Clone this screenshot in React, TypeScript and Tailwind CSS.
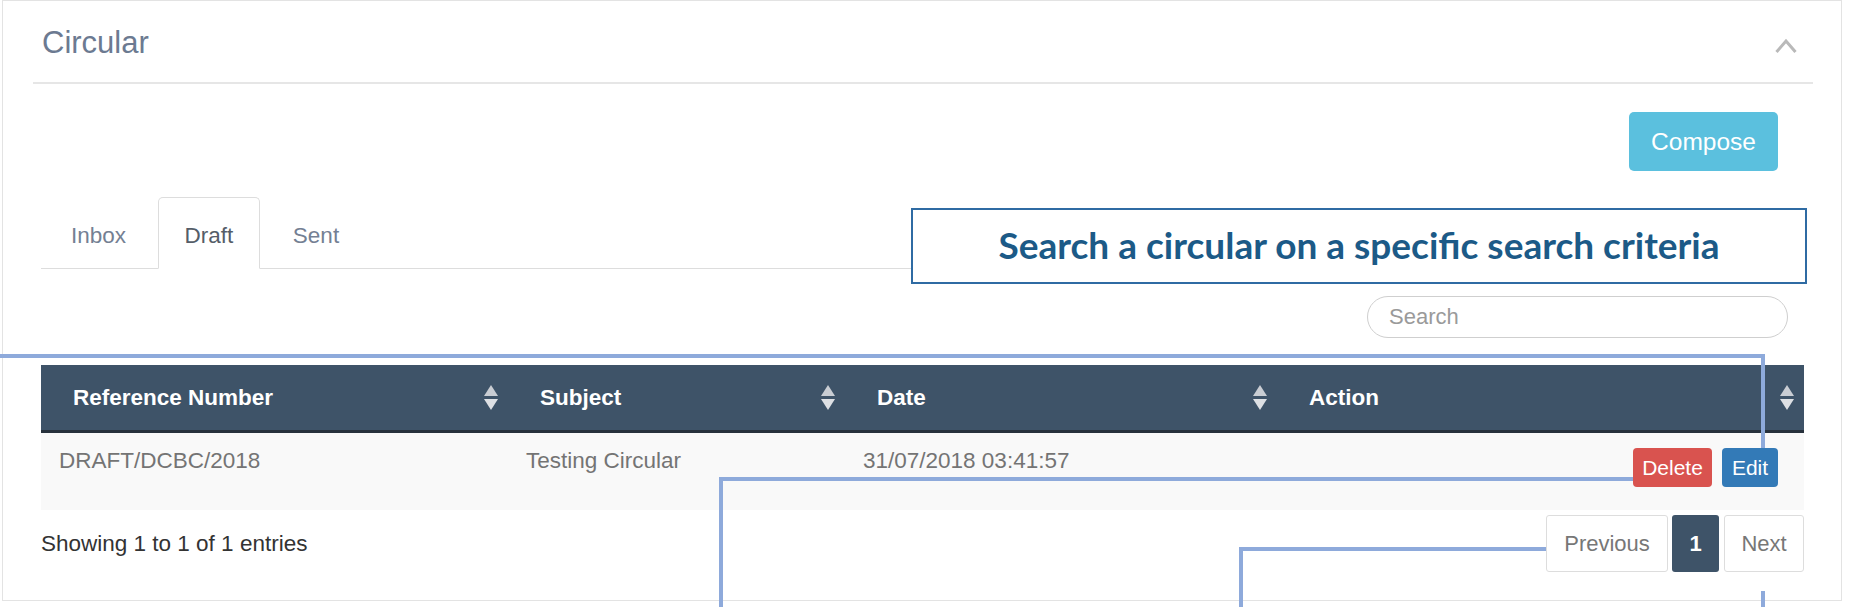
import React from "react";

function SortIcon() {
  return (
    <svg width="14" height="26" viewBox="0 0 14 26" className="shrink-0">
      <polygon points="7,0 14,11 0,11" fill="#c9cdd3" />
      <polygon points="0,14 14,14 7,25" fill="#dde0e4" />
    </svg>
  );
}

function Chevron() {
  return (
    <svg width="22" height="16" viewBox="0 0 22 16" className="mt-[37px]">
      <polyline points="1.5,14 11,3 20.5,14" fill="none" stroke="#b9b9b9" strokeWidth="3" />
    </svg>
  );
}

const cols = "grid grid-cols-[467px_337px_432px_527px]";

export default function App() {
  return (
    <div className="relative w-[1854px] h-[607px] bg-white overflow-hidden font-['Liberation_Sans',Arial,sans-serif]">
      <div className="ml-[2px] w-[1840px] h-[601px] border border-[#e3e3e3] flex flex-col">
        {/* Header */}
        <div className="ml-[30px] w-[1780px] h-[83px] border-b-2 border-[#e6e6e6] flex items-start justify-between pl-[9px] pr-[16px]">
          <div className="pt-[24px] text-[31px] leading-[36px] text-[#6c7a91]">Circular</div>
          <Chevron />
        </div>

        <div className="ml-[38px] w-[1763px] flex flex-col">
          {/* Compose */}
          <div className="mt-[28px] flex justify-end pr-[26px]">
            <button className="w-[149px] h-[59px] rounded-[5px] bg-[#5bc0de] text-white text-[24.5px] leading-[59px]">
              Compose
            </button>
          </div>

          {/* Tabs */}
          <div className="mt-[26px] flex h-[72px] border-b border-[#dddddd] w-[1766px]">
            <div className="w-[115px] h-[72px] mr-[2px] flex items-center justify-center pt-[5px] text-[22.5px] text-[#748093]">
              Inbox
            </div>
            <div className="w-[102px] h-[72px] mr-[2px] -mb-px flex items-center justify-center pt-[5px] text-[22.5px] text-[#555d68] bg-white border border-[#dddddd] border-b-white rounded-t-[5px]">
              Draft
            </div>
            <div className="w-[108px] h-[72px] flex items-center justify-center pt-[5px] text-[22.5px] text-[#748093]">
              Sent
            </div>
          </div>

          {/* Search */}
          <div className="mt-[27px] flex justify-end pr-[16px]">
            <input
              readOnly
              placeholder="Search"
              className="w-[421px] h-[42px] rounded-full border border-[#cfcfcf] pl-[21px] text-[22px] outline-none placeholder:text-[#9a9a9a] font-['Liberation_Sans',Arial,sans-serif]"
            />
          </div>

          {/* Table */}
          <div className="mt-[27px] flex flex-col">
            <div className={`${cols} h-[68px] bg-[#3e5368] border-b-[3px] border-[#27313c] text-white font-bold text-[22.5px]`}>
              {["Reference Number", "Subject", "Date", "Action"].map((h) => (
                <div key={h} className="flex items-center justify-between pl-[32px] pr-[10px]">
                  <span>{h}</span>
                  <SortIcon />
                </div>
              ))}
            </div>
            <div className={`${cols} h-[77px] bg-[#f9f9f9] text-[22.5px] text-[#747474]`}>
              <div className="pl-[18px] pt-[15px] leading-[26px]">DRAFT/DCBC/2018</div>
              <div className="pl-[18px] pt-[15px] leading-[26px]">Testing Circular</div>
              <div className="pl-[18px] pt-[15px] leading-[26px]">31/07/2018 03:41:57</div>
              <div className="flex justify-end items-start pt-[15px] pr-[26px] gap-[10px]">
                <span className="h-[39px] w-[79px] rounded-[4px] bg-[#d9534f] text-white text-[21px] leading-[39px] text-center">Delete</span>
                <span className="h-[39px] w-[56px] rounded-[4px] bg-[#337ab7] text-white text-[21px] leading-[39px] text-center">Edit</span>
              </div>
            </div>
          </div>

          {/* Footer */}
          <div className="mt-[5px] flex items-center justify-between h-[57px]">
            <span className="text-[22.5px] text-[#333333]">Showing 1 to 1 of 1 entries</span>
            <div className="flex items-stretch h-[57px] gap-[4px]">
              <span className="w-[122px] flex items-center justify-center border border-[#dddddd] rounded-[3px] text-[22px] text-[#777777]">Previous</span>
              <span className="w-[47px] flex items-center justify-center rounded-[3px] bg-[#3e5368] text-white text-[22px] font-bold">1</span>
              <span className="ml-[1px] w-[80px] flex items-center justify-center border border-[#dddddd] rounded-[3px] text-[22px] text-[#777777]">Next</span>
            </div>
          </div>
        </div>
      </div>

      {/* Annotation callout */}
      <div className="absolute left-[911px] top-[208px] w-[896px] h-[76px] border-2 border-[#2f6ba3] bg-white flex items-center justify-center">
        <span className="font-['Lato',sans-serif] font-bold text-[37px] text-[#1c5a87] leading-none pb-[4px]">
          Search a circular on a specific search criteria
        </span>
      </div>

      {/* Connector lines */}
      <div className="absolute left-0 top-[354px] w-[1765px] h-[4px] bg-[#8eaadb]" />
      <div className="absolute left-[1761px] top-[354px] w-[4px] h-[94px] bg-[#8eaadb]" />
      <div className="absolute left-[719px] top-[477px] w-[914px] h-[4px] bg-[#8eaadb]" />
      <div className="absolute left-[719px] top-[477px] w-[4px] h-[130px] bg-[#8eaadb]" />
      <div className="absolute left-[1239px] top-[547px] w-[307px] h-[4px] bg-[#8eaadb]" />
      <div className="absolute left-[1239px] top-[547px] w-[4px] h-[60px] bg-[#8eaadb]" />
      <div className="absolute left-[1761px] top-[591px] w-[4px] h-[16px] bg-[#8eaadb]" />
    </div>
  );
}
